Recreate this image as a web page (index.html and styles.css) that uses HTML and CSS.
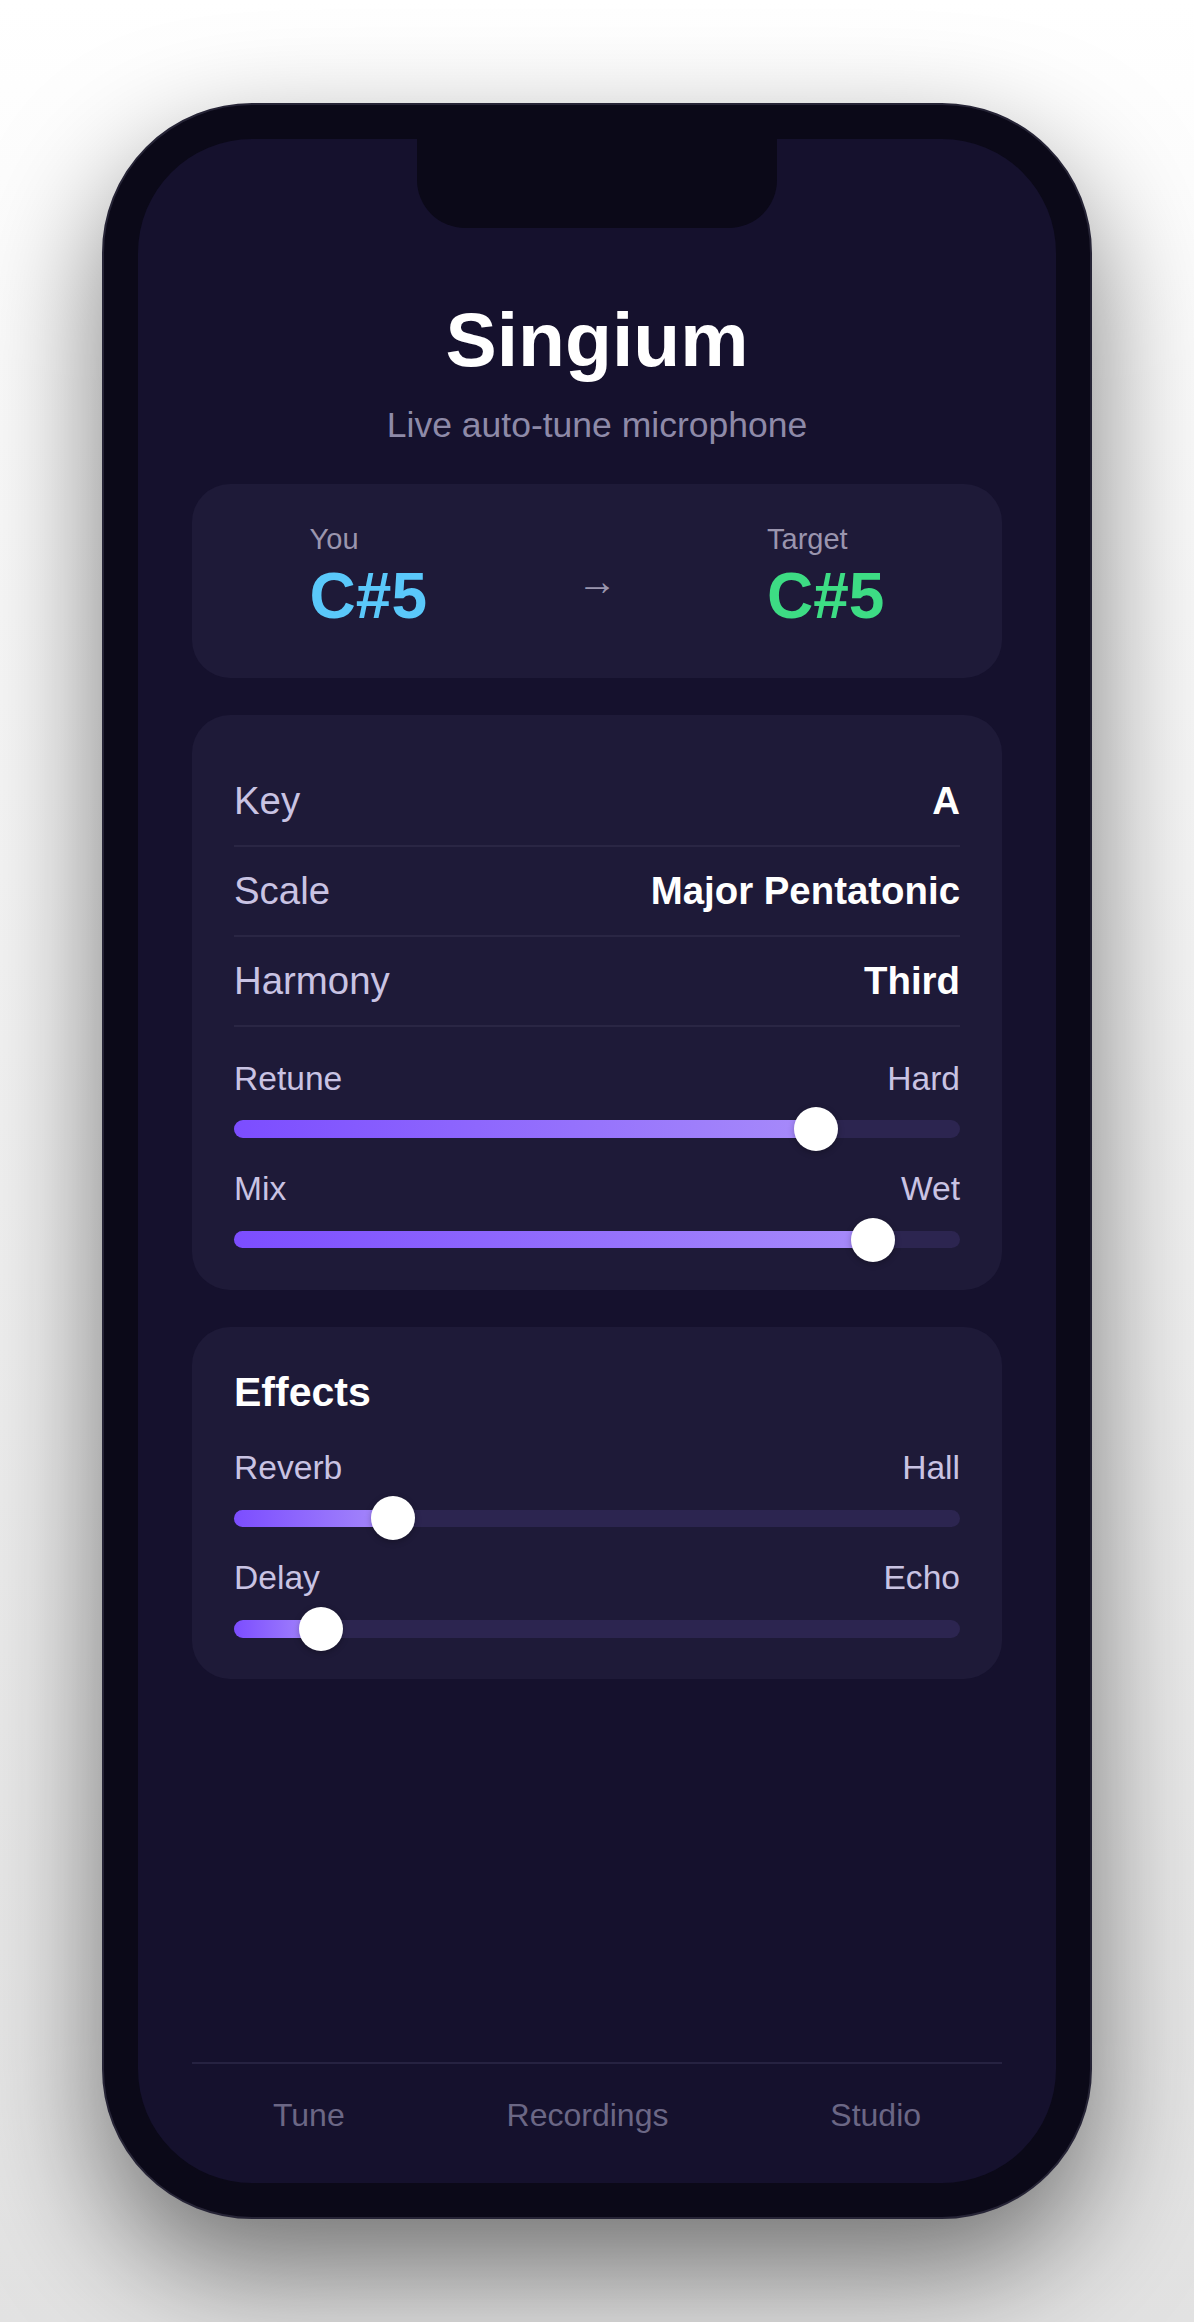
FILE: index.html
```html
<!DOCTYPE html>
<html lang="en">
<head>
<meta charset="utf-8">
<title>Singium</title>
<link rel="stylesheet" href="styles.css">
</head>
<body>
  <div class="phone">
    <div class="screen">
      <div class="notch"></div>

      <header class="hero">
        <h1 class="title">Singium</h1>
        <p class="subtitle">Live auto-tune microphone</p>
      </header>

      <section class="card pitch">
        <div class="note">
          <span class="note-label">You</span>
          <span class="note-value note-you">C#5</span>
        </div>
        <span class="arrow">→</span>
        <div class="note">
          <span class="note-label">Target</span>
          <span class="note-value note-target">C#5</span>
        </div>
      </section>

      <section class="card settings">
        <div class="row"><span class="row-label">Key</span><span class="row-value">A</span></div>
        <div class="row"><span class="row-label">Scale</span><span class="row-value">Major Pentatonic</span></div>
        <div class="row"><span class="row-label">Harmony</span><span class="row-value">Third</span></div>

        <div class="sliders">
          <div class="slider">
            <div class="slider-head"><span>Retune</span><span>Hard</span></div>
            <div class="track"><div class="fill" style="width:80.1%"><span class="thumb"></span></div></div>
          </div>
          <div class="slider">
            <div class="slider-head"><span>Mix</span><span>Wet</span></div>
            <div class="track"><div class="fill" style="width:88%"><span class="thumb"></span></div></div>
          </div>
        </div>
      </section>

      <section class="card effects">
        <h2 class="card-title">Effects</h2>
        <div class="slider">
          <div class="slider-head"><span>Reverb</span><span>Hall</span></div>
          <div class="track"><div class="fill" style="width:21.9%"><span class="thumb"></span></div></div>
        </div>
        <div class="slider">
          <div class="slider-head"><span>Delay</span><span>Echo</span></div>
          <div class="track"><div class="fill" style="width:12%"><span class="thumb"></span></div></div>
        </div>
      </section>

      <nav class="tabbar">
        <span class="tab">Tune</span>
        <span class="tab">Recordings</span>
        <span class="tab">Studio</span>
      </nav>
    </div>
  </div>
</body>
</html>
```

FILE: styles.css
```css
* {
  box-sizing: border-box;
}

html,
body {
  margin: 0;
  padding: 0;
}

body {
  min-height: 100vh;
  display: flex;
  align-items: center;
  justify-content: center;
  background: linear-gradient(180deg, #ffffff 0%, #f3f3f3 45%, #e2e2e2 100%);
  font-family: "Liberation Sans", Arial, "DejaVu Sans", sans-serif;
}

/* device frame */
.phone {
  width: 990px;
  height: 2116px;
  padding: 34px;
  border: 2px solid #262436;
  border-radius: 150px;
  background: #0b0918;
  box-shadow: 0 50px 120px rgba(0, 0, 0, 0.5);
}

.screen {
  position: relative;
  height: 100%;
  display: flex;
  flex-direction: column;
  padding: 156px 54px 0;
  border-radius: 114px;
  background: #15112d;
  overflow: hidden;
}

.notch {
  position: absolute;
  top: 0;
  left: 50%;
  width: 360px;
  height: 89px;
  margin-left: -180px;
  border-radius: 0 0 48px 48px;
  background: #0b0918;
}

/* heading */
.hero {
  text-align: center;
}

.title {
  margin: 0;
  font-size: 76.8px;
  line-height: 1.15;
  font-weight: 700;
  color: #ffffff;
}

.subtitle {
  margin: 21.7px 0 0;
  font-size: 35.5px;
  line-height: 1.15;
  color: #8e8aa8;
}

/* cards */
.card {
  border-radius: 38px;
  background: #1e1a38;
}

.pitch {
  margin-top: 37.9px;
  display: flex;
  align-items: center;
  justify-content: center;
  gap: 150px;
  padding: 39.3px 0 44.4px;
}

.note {
  display: flex;
  flex-direction: column;
}

.note-label {
  font-size: 29px;
  line-height: 1.15;
  color: #9a95ae;
}

.note-value {
  margin-top: 3.4px;
  font-size: 64px;
  line-height: 1.15;
  font-weight: 700;
}

.note-you {
  color: #5ac8fa;
}

.note-target {
  color: #3ddc84;
}

.arrow {
  width: 40px;
  margin-top: 6px;
  text-align: center;
  font-size: 40px;
  line-height: 1;
  color: #9a95ae;
}

.settings {
  margin-top: 37px;
  padding: 42px 42px;
}

.row {
  display: flex;
  justify-content: space-between;
  align-items: baseline;
  padding: 22px 0;
  border-bottom: 2px solid #2a2644;
  font-size: 38.4px;
  line-height: 44px;
}

.row-label {
  color: #c9c3e3;
}

.row-value {
  font-weight: 700;
  color: #ffffff;
}

.sliders {
  margin-top: 33px;
  display: flex;
  flex-direction: column;
  gap: 32.4px;
}

.effects {
  margin-top: 37px;
  padding: 42px 42px 41.6px;
  display: flex;
  flex-direction: column;
  gap: 32.4px;
}

.card-title {
  margin: 0;
  font-size: 41px;
  line-height: 1.15;
  font-weight: 700;
  color: #ffffff;
}

/* sliders */
.slider-head {
  display: flex;
  justify-content: space-between;
  font-size: 33.6px;
  line-height: 1.15;
  color: #c9c3e3;
}

.track {
  margin-top: 22px;
  height: 17.5px;
  border-radius: 9px;
  background: #2c2550;
}

.fill {
  position: relative;
  height: 100%;
  border-radius: 9px;
  background: linear-gradient(90deg, #7c4dff 0%, #a78bfa 100%);
}

.thumb {
  position: absolute;
  top: 50%;
  right: -22px;
  width: 44px;
  height: 44px;
  margin-top: -22px;
  border-radius: 50%;
  background: #ffffff;
  box-shadow: 0 2px 6px rgba(0, 0, 0, 0.25);
}

/* bottom navigation */
.tabbar {
  margin-top: auto;
  display: flex;
  justify-content: space-around;
  padding: 33px 0 49px;
  border-top: 2px solid #262241;
  font-size: 32px;
  line-height: 1.15;
  color: #6b6785;
}
```
